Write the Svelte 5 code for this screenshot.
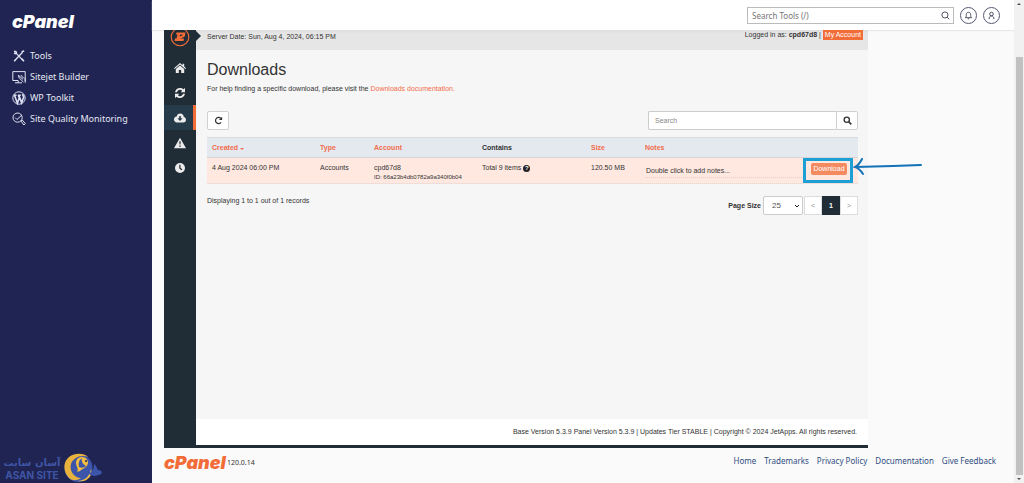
<script lang="ts">
  interface Backup {
    created: string;
    type: string;
    account: string;
    id: string;
    items: number;
    size: string;
  }

  const footerLinks = ['Home', 'Trademarks', 'Privacy Policy', 'Documentation', 'Give Feedback'];

  const backups: Backup[] = [
    { created: '4 Aug 2024 06:00 PM', type: 'Accounts', account: 'cpd67d8', id: '66a23b4db0782a9a340f0b04', items: 9, size: '120.50 MB' },
  ];

  let toolQuery = $state('');
  let search = $state('');
  let pageSize = $state('25');
</script>

<div class="shell">
  <aside class="sidebar">
    <a class="brand" href="#home">cPanel</a>
    <nav class="tools">
      <a href="#tools">
        <svg viewBox="0 0 14 14"><path d="M3.6 3.6 11 11.4M10.6 3.2 3 11.2" stroke-width="1.3" /><path d="M2 2.2l2 .4.4 1.6-1 .5L2 4M12.2 2l-2.6.8M9.8 9.8l2.2 2.4M2.2 12.4l1.6-2" stroke-width="1.5" /></svg>
        Tools
      </a>
      <a href="#sitejet">
        <svg viewBox="0 0 14 14"><path d="M6 10.5H.8V1.6h12.4v9.6M3 12.8h7M6.2 10.5v2.3M13.2 7.6v5.2" /><path d="M6.6 5.4l4.4 4M7.4 8.2l4 3.8M8.8 5l3 3.4M6.4 5.2l.8 3" /></svg>
        Sitejet Builder
      </a>
      <a href="#wp">
        <svg viewBox="0 0 14 14"><circle cx="7" cy="7" r="6.2" /><path d="M1.8 4.3h2.7M5.8 4.3h3M2.6 4.4l2.8 7.8L7.3 6.8 6.3 4.4M7 4.4l2.6 7.4 1.9-5.3c.4-1.5-.9-2.4-1-3.4" stroke-width="1.6" /></svg>
        WP Toolkit
      </a>
      <a href="#quality">
        <svg viewBox="0 0 14 14"><circle cx="5.6" cy="5.6" r="4.6" /><path d="M3.2 5.7l1.8 1.8 5-4.6M8.9 9l1.2-1.1 3.2 3.6-1.4 1.5L8.9 9" /></svg>
        Site Quality Monitoring
      </a>
    </nav>
    <div class="watermark">
      <div class="mark-text">
        <span class="fa" lang="fa" dir="rtl">آسان سایت</span>
        <span class="en">ASAN SITE</span>
      </div>
      <svg viewBox="0 0 38 30">
        <circle cx="14.500" cy="15" r="14" fill="#3c55ab" />
        <path d="M5 25C-3 17 0 4 10 1.500 15 0 21 1 24 4 17 1 9 5 7 11c-1 4 0 8 3 11 2 2 4 3 7 3-4 3-9 3-12 0z" fill="#e8b23c" />
        <path d="M13 19c2-3-1-6-1-9 0-4 3-6 6-6 4 0 6 3 6 6-1 5-5 5-8 8z" fill="#f0bd42" />
        <path d="M15 14c-1-4 0-7 3-9-1 4 1 6 4 8-2 2-5 2-7 1z" fill="#3c55ab" />
        <path d="M13 28c8 0 13-5 14-12 2 6-3 14-14 12z" fill="#f0bd42" />
        <path d="M24 20c5 0 6-5 6-9 3 2 3 5 4 6 5 0 5 5 0 5-3 2-7 1-10-2z" fill="#3c55ab" />
        <circle cx="22" cy="8" r="1" fill="#1f2452" />
      </svg>
    </div>
  </aside>

  <div class="page">
    <header class="topbar">
      <div class="tool-search">
        <input type="text" aria-label="Search Tools" placeholder="Search Tools (/)" bind:value={toolQuery} />
        <button aria-label="Search">
          <svg viewBox="0 0 10 10"><circle cx="4.4" cy="4.4" r="3.4" /><path d="M6.9 6.9 9.2 9.2" /></svg>
        </button>
      </div>
      <button class="round" aria-label="Notifications">
        <svg viewBox="0 0 10 10"><path d="M1.6 7.4h6.8c-1-.9-1-1.9-1-3.4C7.4 2.3 6.4 1.5 5 1.500S2.600 2.300 2.600 4c0 1.500 0 2.500-1 3.400zM4.200 8.700h1.600" /></svg>
      </button>
      <button class="round" aria-label="User">
        <svg viewBox="0 0 10 10"><circle cx="5" cy="3.400" r="2" /><path d="M2.300 9c0-2 1-3.500 2.700-3.500S7.700 7 7.700 9" /></svg>
      </button>
    </header>

    <div class="panel">
      <nav class="rail">
        <a class="rail-logo" href="#jetbackup" aria-label="JetBackup">
          <svg viewBox="0 0 20 20"><circle cx="10" cy="10" r="8.800" fill="none" stroke="#f26c38" stroke-width="1.100" /><path d="M6.500 5.500H15.500L14.800 9.500 10.500 11.500H14L13.500 14H4.500L5 11.500H6.500L7.500 7.500H6zM10.200 7.400 9.700 9.500 12.300 8.500 12.500 7.400z" fill="#f26c38" fill-rule="evenodd" /></svg>
        </a>
        <a href="#home" aria-label="Home">
          <svg viewBox="0 0 12 12"><path d="M6 1 0 6.200l.7.800L6 2.600 11.300 7l.7-.8-1.800-1.600V1.800H8.600v1.400zM6 3.600 1.800 7v4h3V8h2.400v3h3V7z" /></svg>
        </a>
        <a href="#queue" aria-label="Queue">
          <svg viewBox="0 0 12 12"><path d="M1 5.200C1.500 2.600 3.500 1 6 1c1.400 0 2.500.5 3.400 1.300L11 .9V5.200H6.700l1.400-1.500C7.500 3.100 6.800 2.800 6 2.800c-1.400 0-2.600.9-3 2.400zM11 6.800C10.500 9.400 8.500 11 6 11c-1.400 0-2.500-.5-3.400-1.300L1 11.100V6.800h4.300L3.900 8.300c.6.600 1.300.9 2.100.9 1.400 0 2.600-.9 3-2.400z" /></svg>
        </a>
        <a class="active" href="#downloads" aria-label="Downloads">
          <svg viewBox="0 0 12 12"><path d="M9.800 5.100C9.700 2.900 8.200 1.600 6.200 1.600 4.300 1.600 3 2.700 2.700 4.600 1 4.700 0 6 0 7.400 0 9 1.200 10.400 3 10.400h6.400c1.600 0 2.600-1.200 2.600-2.700 0-1.300-.9-2.400-2.200-2.600zM5.200 4h1.600v2.200h1.800L6 9 3.400 6.200h1.800z" fill-rule="evenodd" /></svg>
        </a>
        <a href="#alerts" aria-label="Alerts">
          <svg viewBox="0 0 12 12"><path d="M6 .8 0 11.200h12zM5.300 4.200h1.400l-.2 3.400h-1zM5.300 8.400h1.400v1.400H5.300z" fill-rule="evenodd" /></svg>
        </a>
        <a href="#logs" aria-label="Logs">
          <svg viewBox="0 0 12 12"><path d="M6 1a5 5 0 1 0 0 10A5 5 0 0 0 6 1zM5.300 2.800h1.200v3l1.900 1.600-.8.900-2.300-1.900z" fill-rule="evenodd" /></svg>
        </a>
      </nav>

      <div class="body">
        <div class="status">
          <span>Server Date: Sun, Aug 4, 2024, 06:15 PM</span>
          <span class="login">Logged in as: <b>cpd67d8</b> | <a href="#account">My Account</a></span>
        </div>

        <main class="content">
          <h1>Downloads</h1>
          <p>For help finding a specific download, please visit the <a href="#docs">Downloads documentation.</a></p>

          <div class="toolbar">
            <button class="refresh" aria-label="Refresh">
              <svg viewBox="0 0 10 10"><path d="M7.800 7.100A3.400 3.400 0 1 1 7.600 2.700" fill="none" stroke="currentColor" stroke-width="1.400" /><path d="M9 .8v3.600H5.400z" /></svg>
            </button>
            <div class="search">
              <input type="text" aria-label="Search downloads" placeholder="Search" bind:value={search} />
              <button aria-label="Search">
                <svg viewBox="0 0 10 10"><circle cx="4.200" cy="4.200" r="2.900" fill="none" stroke="currentColor" stroke-width="1.500" /><path d="M6.400 6.400 9.200 9.200" stroke="currentColor" stroke-width="1.900" /></svg>
              </button>
            </div>
          </div>

          <table>
            <colgroup>
              <col class="c-created" /><col class="c-type" /><col class="c-account" /><col class="c-contains" /><col class="c-size" /><col /><col class="c-action" />
            </colgroup>
            <thead>
              <tr>
                <th><a href="#created">Created <i class="caret"></i></a></th>
                <th><a href="#type">Type</a></th>
                <th><a href="#account">Account</a></th>
                <th>Contains</th>
                <th><a href="#size">Size</a></th>
                <th><a href="#notes">Notes</a></th>
                <th></th>
              </tr>
            </thead>
            <tbody>
              {#each backups as row}
                <tr>
                  <td>{row.created}</td>
                  <td>{row.type}</td>
                  <td>{row.account}<small>ID: {row.id}</small></td>
                  <td>Total {row.items} items <span class="help">?</span></td>
                  <td>{row.size}</td>
                  <td><div class="note">Double click to add notes...</div></td>
                  <td class="action">
                    <button class="download">Download</button>
                    <span class="callout"></span>
                    <svg class="arrow" viewBox="0 0 70 20"><path d="M68 9 40 10 2 11M9 3C7 7 4 10 2 11c4 1 6 4 8 7" /></svg>
                  </td>
                </tr>
              {/each}
            </tbody>
          </table>

          <div class="pager">
            <span class="count">Displaying 1 to 1 out of 1 records</span>
            <label for="page-size">Page Size</label>
            <span class="select">
              <select id="page-size" bind:value={pageSize}>
                <option>25</option>
                <option>50</option>
                <option>100</option>
              </select>
              <svg viewBox="0 0 6 4"><path d="M1 1l2 2 2-2" /></svg>
            </span>
            <div class="pages">
              <button>&lt;</button>
              <button class="current">1</button>
              <button>&gt;</button>
            </div>
          </div>
        </main>

        <div class="version">Base Version 5.3.9 Panel Version 5.3.9 | Updates Tier STABLE | Copyright © 2024 JetApps. All rights reserved.</div>
      </div>
    </div>

    <footer>
      <a class="brand" href="#home">cPanel</a>
      <span class="release">120.0.14</span>
      <nav>
        {#each footerLinks as link}
          <a href="#footer">{link}</a>
        {/each}
      </nav>
    </footer>
  </div>

  <div class="scrollbar" aria-hidden="true">
    <i class="up"></i>
    <div class="thumb"></div>
    <i class="down"></i>
  </div>
</div>

<style>
  :global(body) { margin: 0; background: #fafafa; }
  .shell, .shell * { box-sizing: border-box; }
  .shell { display: flex; min-height: 100vh; font-family: "Noto Sans", "Open Sans", sans-serif; font-size: 9px; color: #333; }
  a { text-decoration: none; color: inherit; }
  button { padding: 0; margin: 0; font: inherit; cursor: pointer; }
  svg { display: block; flex-shrink: 0; }
  .brand { font-family: Inter, sans-serif; font-weight: 900; font-style: italic; font-size: 18px; line-height: 20px; }

  .sidebar { width: 152px; flex-shrink: 0; display: flex; flex-direction: column; background: #1f2452; color: #e6e8f4; }
  .sidebar .brand { padding: 12px 0 0 12px; color: #fff; }
  .tools { display: flex; flex-direction: column; padding: 13px 0 0 12px; }
  .tools a { display: flex; align-items: center; gap: 4px; height: 21px; white-space: nowrap; }
  .tools svg { width: 14px; height: 14px; fill: none; stroke: #dfe2f2; stroke-width: 1; }
  .watermark { display: flex; align-items: center; margin-top: auto; padding-left: 3px; gap: 3px; color: #3f55a5; }
  .watermark svg { width: 38px; height: 30px; }
  .mark-text { display: flex; flex-direction: column; align-items: center; width: 58px; white-space: nowrap; }
  .fa { font: bold 10px/14px "DejaVu Sans", sans-serif; }
  .en { font: bold 10px/10px Inter, sans-serif; }

  .page { flex: 1; min-width: 0; display: flex; flex-direction: column; background: #fafafa; }
  .topbar { display: flex; justify-content: flex-end; align-items: center; gap: 6px; height: 30px; padding-right: 14px; background: #fff; box-shadow: 0 1px 1px #e8e8e8; }
  .tool-search { display: flex; width: 207px; height: 17px; background: #fff; border: 1px solid #bbb; }
  .tool-search input { flex: 1; min-width: 0; border: 0; padding: 0 4px; font: inherit; font-size: 8px; background: none; outline: 0; }
  .tool-search input::placeholder { color: #757575; opacity: 1; }
  .tool-search button { width: 16px; border: 0; background: none; }
  .topbar svg { width: 9px; height: 9px; margin: auto; fill: none; stroke: #3d4152; stroke-width: 1; }
  .round { width: 17px; height: 17px; border: 1px solid #555a72; border-radius: 50%; background: #fff; }

  .panel { flex: 1; display: flex; margin: 0 146px 0 12px; font: 7px/10px "Liberation Sans", Arial, sans-serif; }
  .rail { width: 32px; display: flex; flex-direction: column; background: #202d37; overflow: hidden; }
  .rail a { display: flex; align-items: center; justify-content: center; height: 25px; flex-shrink: 0; }
  .rail a svg { width: 12px; height: 12px; fill: #ececec; }
  .rail .rail-logo { align-items: flex-end; padding-bottom: 8px; }
  .rail .rail-logo svg { width: 20px; height: 20px; }
  .rail .active { background: #263b4a; border-right: 3px solid #f26c38; padding-left: 3px; }
  .body { flex: 1; min-width: 0; display: flex; flex-direction: column; background: #f6f6f6; border-bottom: 3px solid #202d37; }
  .status { display: flex; justify-content: space-between; height: 20px; padding: 0 5px 0 11px; background: linear-gradient(#dedede, #e6e6e6 4px); position: relative; }
  .status::before { content: ""; position: absolute; left: 0; top: 1px; border: 5px solid transparent; border-left-color: #202d37; border-right: 0; }
  .status > span { padding-top: 2px; }
  .status .login { padding-top: 0; }
  .login a { display: inline-block; padding: 0 2px; background: #f26c38; color: #fff; }

  .content { flex: 1; padding: 10px 10px 0 11px; }
  h1 { margin: 0; font-size: 16px; line-height: 19px; font-weight: normal; }
  p { margin: 5px 0 17px; }
  p a, th a { color: #f26c4a; }
  .toolbar { display: flex; justify-content: space-between; height: 19px; margin-bottom: 7px; }
  .toolbar svg { width: 9px; height: 9px; margin: auto; fill: currentColor; }
  .toolbar button { width: 22px; color: #333; background: #fff; border: 1px solid #d0d0d0; border-radius: 2px; }
  .search { display: flex; width: 210px; }
  .search input { flex: 1; min-width: 0; padding: 0 6px; font: inherit; background: #fff; border: 1px solid #ccc; border-right: 0; border-radius: 2px 0 0 2px; }
  .search input::placeholder { color: #888; opacity: 1; }
  .search button { border-radius: 0 2px 2px 0; }

  table { width: 100%; table-layout: fixed; border-collapse: collapse; }
  .c-created { width: 108px; }
  .c-type { width: 54px; }
  .c-account { width: 108px; }
  .c-contains { width: 109px; }
  .c-size { width: 54px; }
  .c-action { width: 56px; }
  th, td { padding: 5px 0 4px 5px; text-align: left; vertical-align: top; white-space: nowrap; }
  th { background: #e4e9f0; border-top: 1px solid #ddd; border-bottom: 1px solid #d5d5d8; }
  td { background: #ffe8e0; padding-bottom: 2px; border-bottom: 1px solid #eeddd8; }
  small { display: block; font-size: 6px; line-height: 8px; }
  .caret { display: inline-block; border: 2px solid transparent; border-top-color: currentColor; border-bottom: 0; }
  .help { display: inline-block; width: 7px; height: 7px; border-radius: 50%; background: #222; color: #fff; font: bold 6px/7px "Liberation Sans", sans-serif; text-align: center; }
  .note { height: 15px; padding: 3px 0 0 1px; border-bottom: 1px dotted #e6cfc8; }
  .action { position: relative; }
  .download { display: block; width: 36px; height: 12px; margin-left: 4px; border: 0; border-radius: 2px; background: #f48a5f; color: #fff; line-height: 12px; }
  .callout { position: absolute; right: 5px; top: 0; width: 50px; height: 25px; border: 3px solid #1c9fd4; pointer-events: none; }
  .arrow { position: absolute; left: 100%; top: -2px; width: 70px; height: 20px; margin-left: -5px; fill: none; stroke: #1272b8; stroke-width: 2; stroke-linecap: round; }

  .pager { display: flex; align-items: center; padding-top: 12px; }
  .count { margin-right: auto; align-self: flex-start; }
  .pager label { font-weight: bold; margin-right: 2px; }
  .select { position: relative; margin-right: 1px; }
  .select select { display: block; width: 40px; height: 19px; padding: 0 8px; appearance: none; font: inherit; font-size: 8px; color: #555; background: #fff; border: 1px solid #ccc; border-radius: 2px; }
  .select svg { position: absolute; right: 3px; top: 8px; width: 6px; height: 4px; fill: none; stroke: #222; stroke-width: 1; pointer-events: none; }
  .pages { display: flex; }
  .pages button { width: 18px; height: 19px; color: #999; background: #fff; border: 1px solid #ddd; }
  .pages .current { color: #fff; font-weight: bold; background: #202d37; border-color: #202d37; }
  .version { height: 26px; padding-right: 11px; line-height: 26px; text-align: right; background: #fff; }

  footer { display: flex; align-items: center; height: 35px; padding: 0 18px 6px 12px; }
  footer .brand { color: #f26c38; }
  .release { font-size: 7px; margin-left: 1px; }
  footer nav { display: flex; gap: 8px; margin-left: auto; margin-bottom: 4px; font-size: 8px; color: #2f4d80; }

  .scrollbar { width: 10px; flex-shrink: 0; display: flex; flex-direction: column; align-items: center; background: #f1f1f1; }
  .scrollbar i { border: 2px solid transparent; }
  .up { margin: 1px 0 52px; border-bottom-color: #505050 !important; }
  .thumb { flex: 1; width: 7px; background: #c1c1c1; }
  .down { margin: 3px 0 1px; border-top-color: #505050 !important; }
</style>
